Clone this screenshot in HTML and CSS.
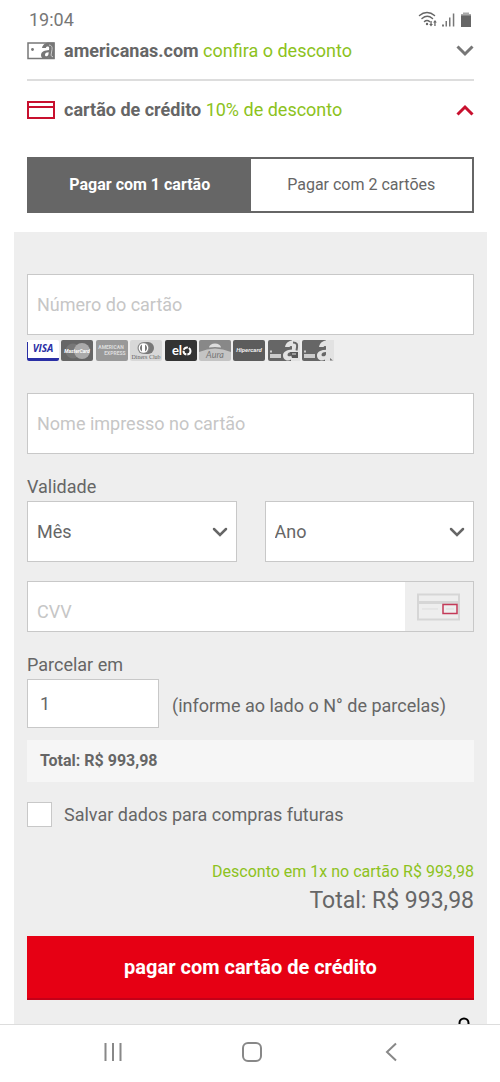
FILE: index.html
```html
<!DOCTYPE html>
<html lang="pt-BR">
<head>
<meta charset="utf-8">
<meta name="viewport" content="width=device-width, initial-scale=1">
<title>Pagamento</title>
<link rel="stylesheet" href="styles.css">
</head>
<body>
<div class="screen">
  <header class="status">
    <time>19:04</time>
    <svg class="status-icons" width="54" height="18" viewBox="0 0 54 18" aria-hidden="true">
      <g fill="none" stroke="#666" stroke-width="1.5" stroke-linecap="round">
        <path d="M1.500 4.500C6 .5 12 .5 16.500 4.500M4 7.500C7.500 4.500 11 4.500 14.500 7.500M6.500 10.500C8 9 10 9 11.500 10.500"/>
      </g>
      <circle cx="9" cy="13" r="1.200" fill="#666"/>
      <path d="M13 15.500l-1.800-2.500h1.200v-3h1.300v3h1.200zM17 9l-1.900 2.500h1.200v3.500h1.300v-3.500h1.200z" fill="#666"/>
      <g fill="#777"><path d="M24 13.500h2v2h-2zM27.500 10h1.500v5.500h-1.500zM31 6.500h1.500v9H31zM34.800 2.500h1.500v13h-1.500z"/></g>
      <path d="M45 1.500h6v2h-6z" fill="#aaa"/><path d="M43 4h10v12H43z" fill="#666"/><path d="M43 3h10v1.500H43z" fill="#aaa"/>
    </svg>
  </header>

  <main class="content">
    <button class="method" type="button" aria-expanded="false">
      <svg width="28" height="18" viewBox="0 0 28 18" aria-hidden="true">
        <path d="M1 1h26v15.500H1z" fill="#fff" stroke="#777" stroke-width="1.500"/>
        <path d="M22 1h5v15.500h-2.500z" fill="#777"/>
        <circle cx="5.500" cy="7.500" r="1.400" fill="#777"/>
        <path fill-rule="evenodd" d="M15 6C16 2 19 .5 22 .5h5.500v16.500H21l.3-1.500C19.500 17.200 14 17.500 14 13.200 14 9.500 18 8.300 22 8l.2-1.500C22.400 4 19.500 4 18.800 6zM21.700 10.200C19.500 10.200 18 11 18 12.700c0 2.300 3 1.800 3.400-.3z" fill="#777"/>
        <path d="M22 3c2.500.3 3.500 1.800 3 4.500l-1 6 2 1.500" fill="none" stroke="#ccc" stroke-width="1"/>
      </svg>
      <span class="method-text"><strong>americanas.com</strong> <span class="offer">confira o desconto</span></span>
      <svg width="18" height="12" viewBox="0 0 18 12" aria-hidden="true"><path d="M1.500 1.500L9 9L16.500 1.500" fill="none" stroke="#777" stroke-width="3"/></svg>
    </button>

    <button class="method method-open" type="button" aria-expanded="true">
      <svg width="28" height="18" viewBox="0 0 28 18" aria-hidden="true"><path d="M1 1h26v16H1zM1 6h26" fill="none" stroke="#c8102e" stroke-width="2"/></svg>
      <span class="method-text"><strong>cartão de crédito</strong> <span class="offer">10% de desconto</span></span>
      <svg width="18" height="12" viewBox="0 0 18 12" aria-hidden="true"><path d="M1.500 10.500L9 3L16.500 10.500" fill="none" stroke="#c8102e" stroke-width="3"/></svg>
    </button>

    <div class="tabs">
      <button class="tab tab-active" type="button">Pagar com 1 cartão</button>
      <button class="tab" type="button">Pagar com 2 cartões</button>
    </div>

    <form class="panel">
      <input class="field" type="text" aria-label="Número do cartão" placeholder="Número do cartão">

      <div class="brands" role="img" aria-label="Bandeiras aceitas">
        <svg width="32" height="21" viewBox="0 0 32 21"><rect width="32" height="21" rx="2" fill="#fff"/><path d="M0 18h32v1a2 2 0 0 1-2 2H2a2 2 0 0 1-2-2zM0 2h1v17H0z" fill="#2a2fa5"/><text x="16" y="12" class="t-visa">VISA</text></svg>
        <svg width="32" height="21" viewBox="0 0 32 21"><rect width="32" height="21" rx="2" fill="#666"/><circle cx="12" cy="11" r="7.500" fill="#777"/><circle cx="21" cy="11" r="8" fill="#aaa"/><text x="16" y="13" class="t-master">MasterCard</text></svg>
        <svg width="32" height="21" viewBox="0 0 32 21"><rect width="32" height="21" rx="2" fill="#999"/><text x="15" y="9" class="t-amex">AMERICAN</text><text x="19" y="15" class="t-amex">EXPRESS</text></svg>
        <svg width="32" height="21" viewBox="0 0 32 21"><rect width="32" height="21" rx="2" fill="#d8d8d8"/><path d="M14 2h4a6 6 0 0 1 0 12h-4z" fill="#777"/><circle cx="13.500" cy="8" r="6" fill="#888"/><circle cx="13.500" cy="8" r="4.800" fill="#fff"/><path d="M12 4.500v7a4 4 0 0 1 0-7zM15 4.500v7a4 4 0 0 0 0-7z" fill="#777"/><text x="16" y="19" class="t-diners">Diners Club</text></svg>
        <svg width="32" height="21" viewBox="0 0 32 21"><rect width="32" height="21" rx="2" fill="#333"/><text x="12" y="15" class="t-elo">el</text><circle cx="22" cy="11" r="3.500" fill="none" stroke="#fff" stroke-width="2" stroke-dasharray="5 1"/></svg>
        <svg width="32" height="21" viewBox="0 0 32 21"><rect width="32" height="21" rx="2" fill="#c4c4c4"/><path d="M2 0h28a2 2 0 0 1 2 2v10Q16 5 0 12V2a2 2 0 0 1 2-2z" fill="#888"/><path d="M10 7.500a6 4 0 0 1 12 0Q16 6.500 10 7.500z" fill="#ddd"/><text x="16" y="18" class="t-aura">Aura</text></svg>
        <svg width="32" height="21" viewBox="0 0 32 21"><rect width="32" height="21" rx="2" fill="#5c5c5c"/><text x="16" y="12" class="t-hiper">Hipercard</text></svg>
        <svg width="32" height="21" viewBox="0 0 32 21"><path d="M2 0h22v21H2a2 2 0 0 1-2-2V2a2 2 0 0 1 2-2z" fill="#666"/><path d="M2 14h11v4H2zM2 10.500h2v2H2z" fill="#ccc"/><path fill-rule="evenodd" d="M17 7C18 2 22 0 27 0h5v21h-9v-1.500C20 22 15 20 15 15.500c0-4 4-5.500 9-6l.2-2C24.400 5.500 22 5.500 21.500 7zM24 12c-3 0-4.500 1-4.500 3s4 1.800 4.500-.5z" fill="#e2e2e2"/><path d="M25 2.500c4 0 4.500 2 4 5l-.5 3" fill="none" stroke="#666" stroke-width="2"/><path d="M22 12h8v6h-6z" fill="#555"/><path d="M24 14h4" stroke="#ddd"/></svg>
        <svg width="32" height="21" viewBox="0 0 32 21"><path d="M2 0h22v21H2a2 2 0 0 1-2-2V2a2 2 0 0 1 2-2z" fill="#666"/><path d="M2 14h11v4H2zM2 10.500h2v2H2z" fill="#ccc"/><path fill-rule="evenodd" d="M17 7C18 2 22 0 27 0h5v21h-9v-1.500C20 22 15 20 15 15.500c0-4 4-5.500 9-6l.2-2C24.400 5.500 22 5.500 21.500 7zM24 12c-3 0-4.500 1-4.500 3s4 1.800 4.500-.5z" fill="#e2e2e2"/><path d="M17 7h7v2.500l-6 1z" fill="#666"/><path d="M28 18l3 2.500h-3z" fill="#777"/></svg>
      </div>

      <input class="field" type="text" aria-label="Nome impresso no cartão" placeholder="Nome impresso no cartão">

      <fieldset class="group">
        <legend class="label">Validade</legend>
        <div class="pair">
          <select class="field select" aria-label="Mês"><option>Mês</option></select>
          <select class="field select" aria-label="Ano"><option>Ano</option></select>
        </div>
      </fieldset>

      <div class="cvv">
        <input class="cvv-input" type="text" aria-label="CVV" placeholder="CVV">
        <span class="cvv-hint">
          <svg width="44" height="28" viewBox="0 0 44 28" aria-hidden="true"><path d="M1 1.500h41v25H1z" fill="none" stroke="#d6d6d6" stroke-width="2"/><path d="M1 9.500h41" stroke="#d6d6d6" stroke-width="3"/><path d="M5 16h16" stroke="#ddd"/><path d="M26 11.500h14v9H26z" fill="#eee" stroke="#c43a58" stroke-width="1.500"/><path d="M29 16h8" stroke="#ddd"/></svg>
        </span>
      </div>

      <div class="group">
        <label class="label" for="parcelas">Parcelar em</label>
        <div class="installments">
          <input class="field field-small" id="parcelas" type="text" value="1">
          <span>(informe ao lado o N° de parcelas)</span>
        </div>
      </div>

      <p class="subtotal">Total: R$ 993,98</p>

      <label class="save"><input class="check" type="checkbox">Salvar dados para compras futuras</label>

      <p class="discount">Desconto em 1x no cartão R$ 993,98</p>
      <p class="total">Total: R$ 993,98</p>
      <button class="pay" type="button">pagar com cartão de crédito</button>
      <svg class="lock" width="14" height="20" viewBox="0 0 14 20" aria-hidden="true"><path d="M2.500 9V6a4.500 4.500 0 0 1 9 0v3" fill="none" stroke="#000" stroke-width="2"/><path d="M1 9h12v10H1z"/></svg>
    </form>
  </main>

  <nav class="navbar" aria-label="Navegação do sistema">
    <button type="button" aria-label="Recentes"><svg width="20" height="20" viewBox="0 0 20 20"><path d="M2.500 1v18M10 1v18M17.500 1v18" stroke="#888" stroke-width="2"/></svg></button>
    <button type="button" aria-label="Início"><svg width="20" height="20" viewBox="0 0 20 20"><rect x="1" y="1" width="18" height="18" rx="5" fill="none" stroke="#888" stroke-width="2"/></svg></button>
    <button type="button" aria-label="Voltar"><svg width="20" height="20" viewBox="0 0 20 20"><path d="M15 1.500L6 10l9 8.500" fill="none" stroke="#888" stroke-width="2"/></svg></button>
  </nav>
</div>
</body>
</html>
```

FILE: styles.css
```css
* { box-sizing: border-box; }
body { margin: 0; background: #fff; color: #666; font: 18px/24px Roboto, "Liberation Sans", sans-serif; }
button, input, select { font: inherit; color: inherit; margin: 0; border-radius: 0; }
button { border: 0; background: none; padding: 0; }
p { margin: 0; }
svg { display: block; flex: none; }

.screen { display: flex; flex-direction: column; height: 100vh; }
.status { display: flex; justify-content: space-between; align-items: center; height: 38px; padding: 2px 28px 0 29px; }
.status time { color: #777; }
.content { flex: 1; min-height: 0; overflow-y: auto; scrollbar-width: none; }

.method { display: flex; align-items: center; gap: 9px; width: calc(100% - 53px); height: 43px; margin: 0 26px 0 27px; padding-bottom: 16px; border-bottom: 2px solid #ddd; text-align: left; }
.method-text { flex: 1; }
.method-open { height: 58px; padding: 0; border: 0; }
.offer { color: #8cc220; }

.tabs { display: grid; grid-template-columns: 1fr 1fr; height: 56px; margin: 18px 26px 0 27px; border: 2px solid #666; }
.tab { font-size: 16px; }
.tab-active { background: #666; color: #fff; font-weight: 700; }

.panel { margin: 19px 13px 0 14px; padding: 42px 13px 16px; background: #eee; }
.field { display: block; width: 100%; height: 61px; padding: 0 9px; border: 1px solid #c8c8c8; background: #fff; outline: 0; }
::placeholder { color: #c6c6c6; opacity: 1; }
.brands { display: flex; justify-content: space-between; max-width: 307px; margin: 5px 0 32px; text-anchor: middle; }
.t-visa { font: italic 700 10px "Open Sans", sans-serif; fill: #2a2fa5; }
.t-master { font: italic 700 5px Roboto, sans-serif; fill: #fff; }
.t-amex { font: 700 5px Roboto, sans-serif; fill: #ddd; }
.t-diners { font: 6px "Liberation Serif", serif; fill: #666; }
.t-elo { font: 700 13px Lato, sans-serif; fill: #fff; }
.t-aura { font: italic 9px Lato, sans-serif; fill: #777; }
.t-hiper { font: italic 700 6px Roboto, sans-serif; fill: #eee; }

.group { margin: 21px 0 0; padding: 0; border: 0; min-width: 0; }
.label { display: block; padding: 0; margin-bottom: 2px; }
.pair { display: grid; grid-template-columns: 1fr 1fr; gap: 28px; }
.select { appearance: none; background: #fff url("data:image/svg+xml,%3Csvg xmlns='http://www.w3.org/2000/svg' width='16' height='10'%3E%3Cpath d='M2 2l6 6 6-6' fill='none' stroke='%23666' stroke-width='2.500' stroke-linecap='round'/%3E%3C/svg%3E") no-repeat right 8px center; }

.cvv { display: flex; height: 51px; margin-top: 19px; border: 1px solid #c8c8c8; }
.cvv-input { flex: 1; min-width: 0; padding: 10px 9px 0; border: 0; background: #fff; outline: 0; }
.cvv-hint { display: flex; align-items: center; justify-content: center; width: 68px; }

.installments { display: flex; align-items: center; gap: 13px; }
.installments span { padding-top: 4px; }
.field-small { width: 132px; height: 49px; padding: 0 12px; }
.subtotal { margin-top: 12px; padding: 9px 13px; background: #f6f6f6; font-size: 16px; font-weight: 700; }
.save { display: flex; align-items: center; gap: 12px; margin-top: 20px; }
.check { appearance: none; width: 25px; height: 25px; border: 1px solid #c8c8c8; background: #fff; }
.discount { margin-top: 33px; color: #8cc220; font-size: 16px; text-align: right; }
.total { font-size: 23px; line-height: 34px; text-align: right; }
.pay { display: block; width: 100%; height: 64px; margin-top: 18px; background: #e60014; color: #fff; font-size: 20px; font-weight: 700; border-bottom: 2px solid #c40018; }
.lock { margin: 17px 3px 0 auto; }

.navbar { display: flex; justify-content: space-around; align-items: center; height: 58px; padding: 0 40px 4px 44px; border-top: 1px solid #ddd; }
```
